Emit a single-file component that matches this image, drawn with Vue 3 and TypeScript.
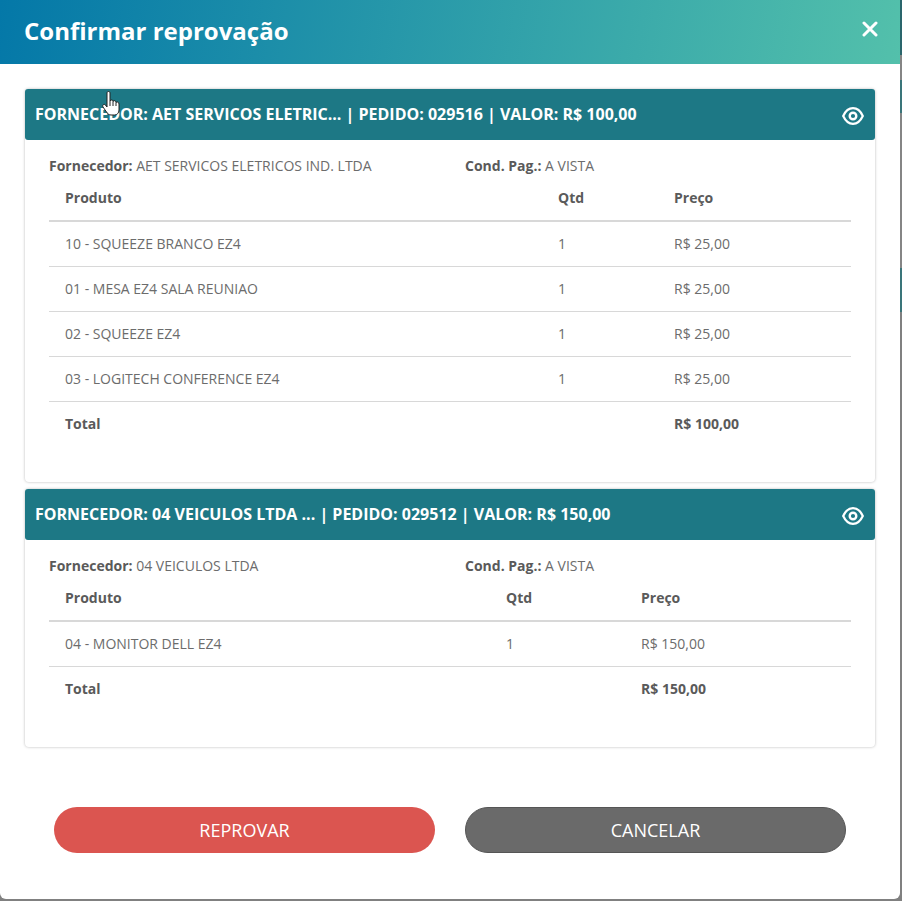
<script setup lang="ts">
interface Row { name: string; qty: string; price: string }
interface Order {
  title: string; supplier: string; total: string; rows: Row[]; qtyWidth: string; priceWidth: string
}
const orders: Order[] = [
  {
    title: 'FORNECEDOR: AET SERVICOS ELETRIC... | PEDIDO: 029516 | VALOR: R$ 100,00',
    supplier: 'AET SERVICOS ELETRICOS IND. LTDA',
    total: 'R$ 100,00',
    qtyWidth: '116px',
    priceWidth: '193px',
    rows: [
      { name: '10 - SQUEEZE BRANCO EZ4', qty: '1', price: 'R$ 25,00' },
      { name: '01 - MESA EZ4 SALA REUNIAO', qty: '1', price: 'R$ 25,00' },
      { name: '02 - SQUEEZE EZ4', qty: '1', price: 'R$ 25,00' },
      { name: '03 - LOGITECH CONFERENCE EZ4', qty: '1', price: 'R$ 25,00' }
    ]
  },
  {
    title: 'FORNECEDOR: 04 VEICULOS LTDA ... | PEDIDO: 029512 | VALOR: R$ 150,00',
    supplier: '04 VEICULOS LTDA',
    total: 'R$ 150,00',
    qtyWidth: '135px',
    priceWidth: '226px',
    rows: [{ name: '04 - MONITOR DELL EZ4', qty: '1', price: 'R$ 150,00' }]
  }
]
</script>

<template>
  <div class="page">
    <div class="modal">
      <header class="head">
        <h1>Confirmar reprovação</h1>
        <svg class="close" width="16" height="16" viewBox="0 0 16 16" aria-label="Fechar">
          <path d="M2 2 L14 14 M14 2 L2 14" stroke="#fff" stroke-width="3" stroke-linecap="round" fill="none" />
        </svg>
      </header>

      <main class="body">
        <section v-for="o in orders" :key="o.title" class="card">
          <div class="card-head">
            <span>{{ o.title }}</span>
            <svg class="eye" width="24" height="24" viewBox="0 0 24 24" fill="none" stroke="#fff">
              <path d="M2.2 12C4.500 7 8 4.200 12 4.200S19.500 7 21.800 12C19.500 17 16 19.800 12 19.800S4.500 17 2.200 12Z" stroke-width="2.200" />
              <circle cx="12" cy="12" r="3.300" stroke-width="2.400" />
            </svg>
          </div>
          <div class="card-body">
            <div class="info">
              <div class="info-a"><b>Fornecedor:</b> {{ o.supplier }}</div>
              <div><b>Cond. Pag.:</b> A VISTA</div>
            </div>
            <table>
              <colgroup>
                <col />
                <col :style="{ width: o.qtyWidth }" />
                <col :style="{ width: o.priceWidth }" />
              </colgroup>
              <thead>
                <tr><th>Produto</th><th>Qtd</th><th>Preço</th></tr>
              </thead>
              <tbody>
                <tr v-for="r in o.rows" :key="r.name">
                  <td>{{ r.name }}</td><td>{{ r.qty }}</td><td>{{ r.price }}</td>
                </tr>
                <tr class="total">
                  <td>Total</td><td></td><td>{{ o.total }}</td>
                </tr>
              </tbody>
            </table>
          </div>
        </section>
      </main>

      <footer class="foot">
        <button class="btn red">REPROVAR</button>
        <button class="btn grey">CANCELAR</button>
      </footer>
    </div>

    <svg class="cursor" width="20" height="26" viewBox="0 0 20 26">
      <path d="M6 3C6 1 9 1 9 3V11C10 9.500 12 9.500 12 11.500C13 10 15 10.500 15 12.500C16 11.500 18 12 18 14V20C18 23 16 25 13.500 25H10C8 25 7 24 5.500 22L2 17C1 15 3 13.500 4.500 15L6 17Z" fill="#fff" stroke="#222" stroke-width="1" stroke-linejoin="round" />
      <path d="M9 11V16M12 11.500V16M15 12.500V16" fill="none" stroke="#222" stroke-width="1" />
    </svg>
  </div>
</template>

<style>
html, body { margin: 0; padding: 0; background: #808080; }
</style>

<style scoped>
.page {
  position: relative;
  width: 902px;
  height: 901px;
  overflow: hidden;
  background: linear-gradient(to bottom,
    #2a666c 0 55px, #858585 55px 80px, #3a757a 80px 113px, #858585 113px 268px, #3a757a 268px 312px, #808080 312px);
  font-family: "Open Sans", "Noto Sans", sans-serif;
  color: #6c6c6c;
}
.modal {
  width: 900px;
  height: 899px;
  background: #fff;
  border-radius: 0 0 6px 6px;
  display: flex;
  flex-direction: column;
  overflow: hidden;
}
.head {
  height: 64px;
  flex: none;
  box-sizing: border-box;
  padding: 0 22px 2px 24px;
  display: flex;
  align-items: center;
  justify-content: space-between;
  background: linear-gradient(100deg, #0478a8 0%, #53c0ab 100%);
}
.head h1 {
  margin: 0;
  color: #fff;
  font-size: 24px;
  line-height: 62px;
  font-weight: 700;
}
.close { margin-bottom: 4px; }
.body {
  flex: none;
  padding: 25px 25px 0;
  display: flex;
  flex-direction: column;
  gap: 7px;
}
.card {
  background: #fff;
  border-radius: 4px;
  box-shadow: 0 0 3px rgba(0, 0, 0, 0.28);
  padding-bottom: 36px;
}
.card-head {
  height: 51px;
  box-sizing: border-box;
  padding: 0 10px 2px;
  border-radius: 3px;
  background: #1d7885;
  color: #fff;
  font-size: 16px;
  font-weight: 700;
  display: flex;
  align-items: center;
  justify-content: space-between;
}
.eye { margin-top: 4px; }
.card-body { padding: 0 24px; }
.info {
  display: flex;
  height: 38px;
  box-sizing: border-box;
  padding-top: 16px;
  font-size: 14px;
  line-height: 20px;
}
.info-a { width: 416px; }
b { font-weight: 700; color: #5a5a5a; }
table {
  width: 100%;
  border-collapse: collapse;
  table-layout: fixed;
  font-size: 14px;
}
th {
  text-align: left;
  font-weight: 700;
  color: #5a5a5a;
  height: 39px;
  padding: 0 16px 3px;
  border-bottom: 2px solid #d8d8d8;
}
td {
  height: 42px;
  padding: 0 16px 2px;
  border-bottom: 1px solid #d8d8d8;
}
.total td { font-weight: 700; color: #5a5a5a; border-bottom: 0; }
.foot {
  margin-top: auto;
  padding: 0 54px 46px;
  display: grid;
  grid-template-columns: 1fr 1fr;
  gap: 30px;
}
.btn {
  height: 46px;
  border-radius: 23px;
  border: 0;
  padding: 0;
  font: 400 18px "Open Sans", "Noto Sans", sans-serif;
  color: #fff;
}
.red { background: #db5550; }
.grey { background: #6a6a6a; border: 1px solid #555; }
.cursor { position: absolute; left: 101px; top: 90px; }
</style>
